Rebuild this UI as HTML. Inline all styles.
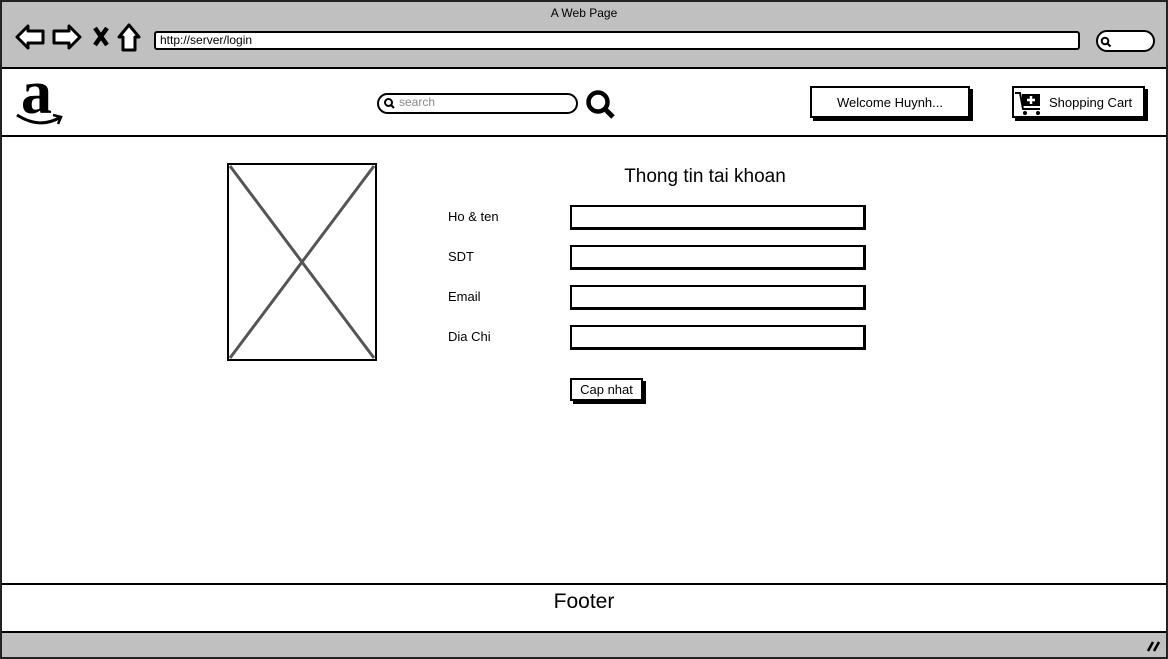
<!DOCTYPE html>
<html><head><meta charset="utf-8"><style>
*{margin:0;padding:0;box-sizing:border-box}
body{width:1168px;height:659px;position:relative;background:#fff;font-family:"Liberation Sans",sans-serif;overflow:hidden;color:#000}
.a{position:absolute}
.box{position:absolute;border:2px solid #000;background:#fff}
.sh{box-shadow:3px 3px 0 #000}
.t{position:absolute;font-size:13px;white-space:nowrap}
</style></head><body>
<div class="a" style="left:0;top:0;width:1168px;height:659px;border:2px solid #222"></div>
<div class="a" style="left:2px;top:2px;width:1164px;height:67px;background:#c0c0c0;border-bottom:2px solid #000"></div>
<div class="t" style="left:0;width:1168px;text-align:center;top:6px;font-size:12px">A Web Page</div>
<svg class="a" style="left:14px;top:22px" width="132" height="30" viewBox="0 0 132 30">
<path d="M3 15 L14 4 L14 9 L29 9 L29 21 L14 21 L14 26 Z" fill="#fff" stroke="#000" stroke-width="3" stroke-linejoin="round"/>
<path d="M66 15 L55 4 L55 9 L40 9 L40 21 L55 21 L55 26 Z" fill="#fff" stroke="#000" stroke-width="3" stroke-linejoin="round"/>
<path d="M81 6 L93 23 M93 6 L81 23" stroke="#000" stroke-width="4.5"/>
<path d="M105 15 L115 3 L125 15 L121 15 L121 28 L109 28 L109 15 Z" fill="#fff" stroke="#000" stroke-width="3" stroke-linejoin="round"/>
</svg>
<div class="box" style="left:154px;top:31px;width:926px;height:19px;border-radius:3px"></div>
<div class="t" style="left:160px;top:33px;font-size:12px">http://server/login</div>
<div class="box" style="left:1096px;top:30px;width:59px;height:22px;border-radius:11px"></div>
<svg class="a" style="left:1100px;top:36px" width="12" height="12"><circle cx="5" cy="5" r="3.3" fill="none" stroke="#000" stroke-width="2"/><path d="M7.5 7.5 L10.5 10.5" stroke="#000" stroke-width="2"/></svg>
<div class="a" style="left:2px;top:135px;width:1164px;height:2px;background:#000"></div>
<div class="t" style="left:21px;top:62px;font-family:'Liberation Serif',serif;font-size:62px;font-weight:bold;line-height:62px">a</div>
<svg class="a" style="left:15px;top:110px" width="50" height="18"><path d="M2 5 Q24 19 44 8" fill="none" stroke="#000" stroke-width="3"/><path d="M38 5 L46 7 L43 14" fill="none" stroke="#000" stroke-width="2.5"/></svg>
<div class="box" style="left:377px;top:93px;width:201px;height:21px;border-radius:11px"></div>
<svg class="a" style="left:383px;top:97px" width="13" height="13"><circle cx="5.5" cy="5.5" r="3.5" fill="none" stroke="#000" stroke-width="2"/><path d="M8 8 L11 11" stroke="#000" stroke-width="2"/></svg>
<div class="t" style="left:399px;top:95px;font-size:12px;color:#888">search</div>
<svg class="a" style="left:585px;top:89px" width="34" height="32"><circle cx="13" cy="13" r="9.5" fill="none" stroke="#000" stroke-width="4.5"/><path d="M19 19 L28 28" stroke="#000" stroke-width="5"/></svg>
<div class="box sh" style="left:810px;top:86px;width:160px;height:32px"></div>
<div class="t" style="left:810px;width:160px;text-align:center;top:95px">Welcome Huynh...</div>
<div class="box sh" style="left:1012px;top:86px;width:133px;height:32px"></div>
<svg class="a" style="left:1014px;top:91px" width="30" height="26"><path d="M1 2 L6 2 L9 18 L26 18" fill="none" stroke="#000" stroke-width="2"/><rect x="8" y="3" width="18" height="12" fill="#000"/><path d="M17 5 V13 M13 9 H21" stroke="#fff" stroke-width="2.5"/><circle cx="11" cy="22" r="2" fill="#000"/><circle cx="24" cy="22" r="2" fill="#000"/></svg>
<div class="t" style="left:1049px;top:95px">Shopping Cart</div>
<svg class="a" style="left:227px;top:163px" width="151" height="199"><rect x="1" y="1" width="148" height="196" fill="#fff" stroke="#000" stroke-width="2"/><path d="M3 3 L147 195 M147 3 L3 195" stroke="#555" stroke-width="3"/></svg>
<div class="t" style="left:560px;width:290px;text-align:center;top:166px;font-size:19px">Thong tin tai khoan</div>
<div class="t" style="left:448px;top:209px">Ho &amp; ten</div>
<div class="t" style="left:448px;top:249px">SDT</div>
<div class="t" style="left:448px;top:289px">Email</div>
<div class="t" style="left:448px;top:329px">Dia Chi</div>
<div class="box" style="left:570px;top:205px;width:296px;height:25px;border-width:2px 3px 3px 2px"></div>
<div class="box" style="left:570px;top:245px;width:296px;height:25px;border-width:2px 3px 3px 2px"></div>
<div class="box" style="left:570px;top:285px;width:296px;height:25px;border-width:2px 3px 3px 2px"></div>
<div class="box" style="left:570px;top:325px;width:296px;height:25px;border-width:2px 3px 3px 2px"></div>
<div class="box sh" style="left:570px;top:378px;width:73px;height:23px"></div>
<div class="t" style="left:570px;width:73px;text-align:center;top:382px">Cap nhat</div>
<div class="a" style="left:2px;top:583px;width:1164px;height:50px;border-top:2px solid #000;border-bottom:2px solid #000"></div>
<div class="t" style="left:0;width:1168px;text-align:center;top:590px;font-size:21px">Footer</div>
<div class="a" style="left:2px;top:633px;width:1164px;height:24px;background:#c0c0c0"></div>
<svg class="a" style="left:1145px;top:639px" width="16" height="14"><path d="M3 12 L8 3 M9 12 L14 3" stroke="#000" stroke-width="2.5"/></svg>
</body></html>
